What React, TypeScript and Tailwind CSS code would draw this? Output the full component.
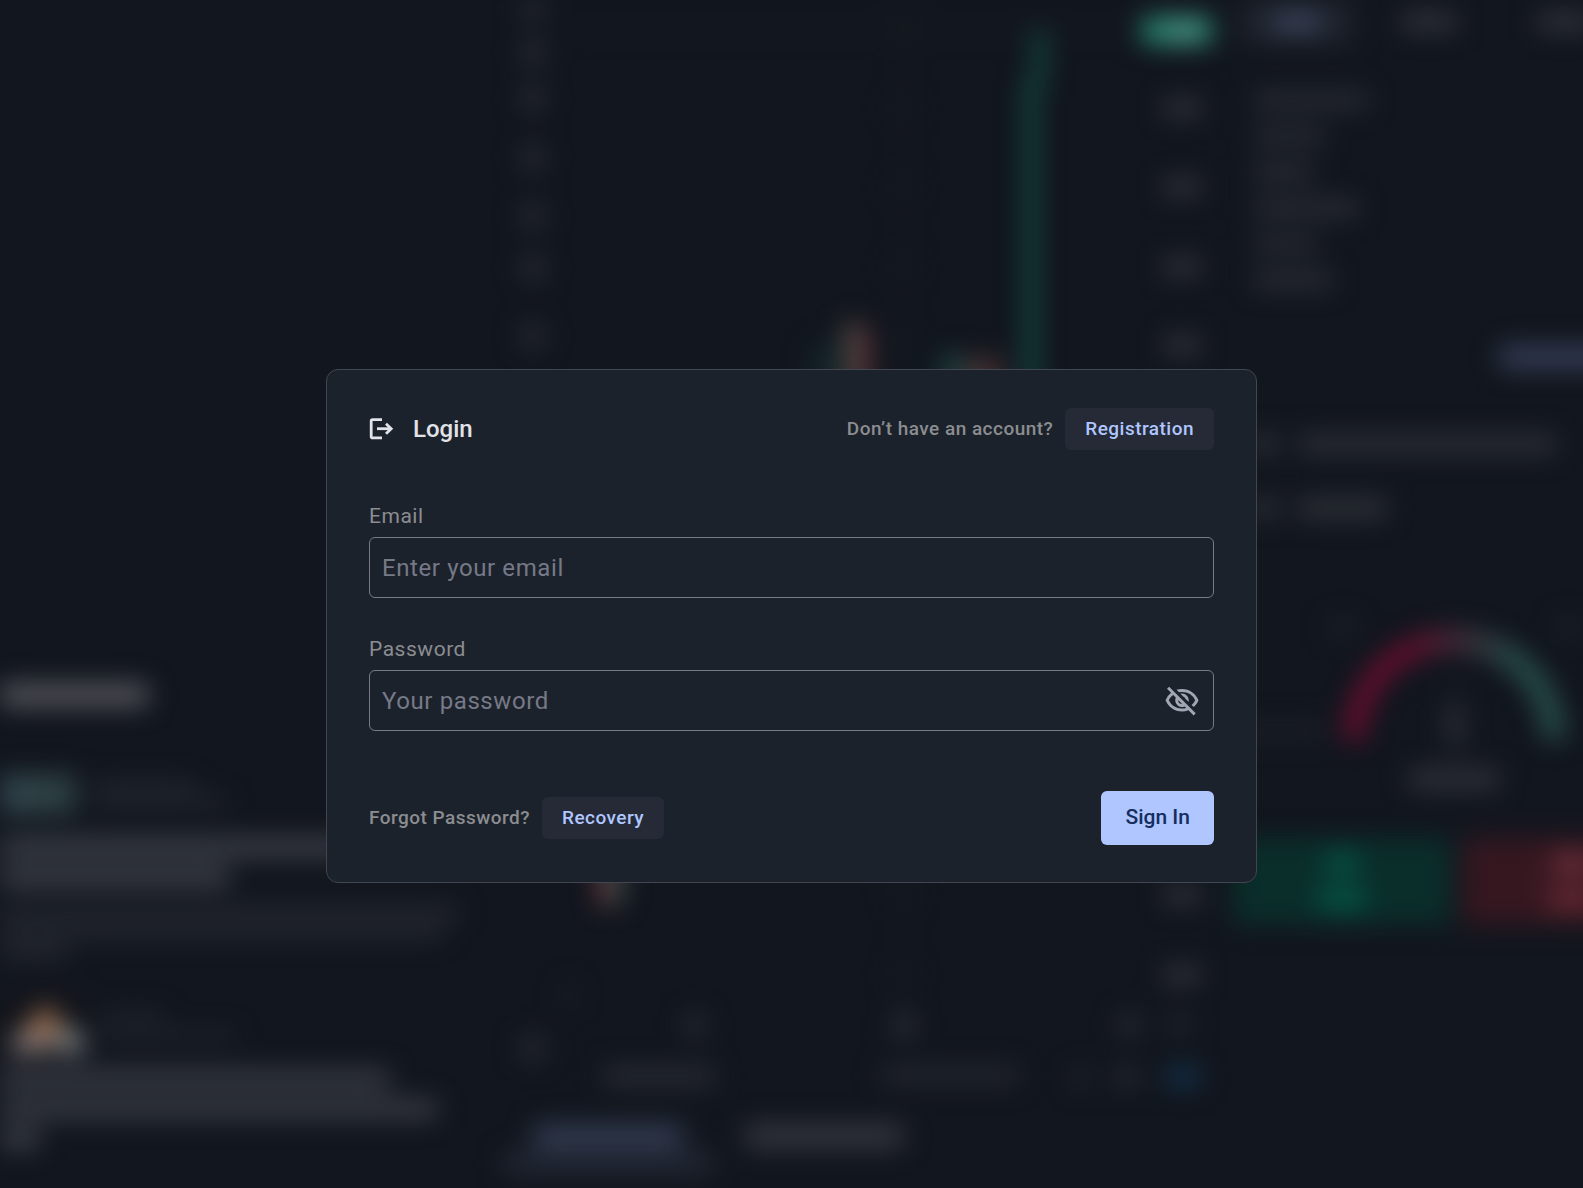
import { useState } from "react";
import type { FormEvent } from "react";
import clsx from "clsx";
import { MdOutlineVisibility, MdOutlineVisibilityOff } from "react-icons/md";

function Bar({ className }: { className: string }) {
  return <div className={clsx("rounded-sm", className)} />;
}

function LoginIcon() {
  return (
    <svg
      viewBox="0 0 28 28"
      className="size-7"
      fill="none"
      stroke="currentColor"
      strokeWidth="2.8"
      aria-hidden="true"
    >
      <path d="M13 4.6H3.6a1.4 1.4 0 0 0-1.4 1.4V21.4a1.4 1.4 0 0 0 1.4 1.4H13" />
      <path d="M8 13.7H22" />
      <path d="M17 8.7L22.2 13.7L17 18.7" />
    </svg>
  );
}

function NewsColumn() {
  return (
    <div className="flex flex-col pt-[684px]">
      <Bar className="h-[22px] w-[148px] bg-[#56585d]" />

      <div className="mt-[68px] flex items-center gap-4">
        <div className="h-10 w-[76px] bg-gradient-to-r from-[#32454f] to-[#2c403f]" />
        <div className="flex flex-col gap-2">
          <Bar className="h-2 w-[104px] bg-[#2a2d34]" />
          <Bar className="h-2 w-[136px] bg-[#2a2d34]" />
        </div>
      </div>
      <div className="mt-6 flex flex-col gap-3">
        <Bar className="h-[18px] w-[350px] bg-[#40434b]" />
        <Bar className="h-[18px] w-[230px] bg-[#40434b]" />
      </div>
      <div className="mt-5 flex flex-col gap-2">
        <Bar className="h-3 w-[460px] bg-[#272a32]" />
        <Bar className="h-3 w-[444px] bg-[#272a32]" />
        <Bar className="h-3 w-[68px] bg-[#292c34]" />
      </div>

      <div className="mt-10 flex items-center gap-4">
        <svg viewBox="0 0 84 56" className="h-14 w-[84px]">
          <rect width="84" height="56" fill="#14151a" />
          <path d="M16 46 L32 20 L48 6 L60 24 L54 46 Z" fill="#94694c" />
          <path d="M8 54 L20 32 L42 38 L48 54 Z" fill="#8a7f80" />
          <path d="M54 54 L60 26 L84 38 L84 54 Z" fill="#7e8386" />
        </svg>
        <div className="flex flex-col gap-3">
          <Bar className="h-2 w-16 bg-[#262a31]" />
          <Bar className="h-2 w-[136px] bg-[#262a31]" />
        </div>
      </div>
      <div className="mt-4 flex flex-col gap-3">
        <Bar className="h-[18px] w-[390px] bg-[#3b3e46]" />
        <Bar className="h-[18px] w-[438px] bg-[#3b3e46]" />
        <Bar className="h-[18px] w-10 bg-[#40434b]" />
      </div>
    </div>
  );
}

function Chart() {
  const tools = [8, 53, 98, 158, 216, 268, 336, 1048];
  const prices = [108, 187, 267, 345, 895, 975];
  const gridRows = [30, 108, 187, 267, 345, 895, 975];

  return (
    <svg viewBox="0 0 746 1188" className="h-[1188px] w-[746px]">
      <path d="M416 0V1000M86 30H650" stroke="#1c2229" strokeWidth="2" />
      {gridRows.map((y) => (
        <rect key={y} x="406" y={y - 10} width="20" height="20" fill="#161c21" />
      ))}
      {tools.map((y) => (
        <rect key={y} x="34" y={y - 13} width="24" height="26" rx="6" fill="#262930" />
      ))}
      {prices.map((y) => (
        <rect key={y} x="676" y={y - 8} width="38" height="16" fill="#33353c" />
      ))}

      {/* Candles */}
      <rect x="324" y="345" width="22" height="60" fill="#13262a" />
      <rect x="355" y="322" width="14" height="80" fill="#404641" />
      <rect x="370" y="326" width="11" height="80" fill="#70373c" />
      <rect x="456" y="354" width="18" height="50" fill="#1c4742" />
      <rect x="478" y="358" width="36" height="50" fill="#463233" />
      <rect x="536" y="80" width="16" height="320" fill="#13463f" />
      <rect x="546" y="30" width="13" height="54" fill="#134c44" />
      <rect x="111" y="850" width="12" height="56" fill="#70393f" />
      <rect x="124" y="850" width="12" height="54" fill="#35504a" />

      {/* Last price */}
      <rect x="655" y="17" width="70" height="27" rx="3" fill="#278570" />
      <rect x="682" y="22" width="30" height="17" fill="#559a88" />

      {/* Time axis */}
      <rect x="76" y="985" width="12" height="20" fill="#1e2228" />
      <rect x="198" y="1014" width="20" height="22" fill="#292c33" />
      <rect x="406" y="1014" width="22" height="22" fill="#2c2f36" />
      <rect x="632" y="1014" width="20" height="22" fill="#292c33" />
      <rect x="682" y="1014" width="20" height="20" fill="#21252b" />

      <rect x="116" y="1066" width="112" height="20" fill="#272a31" />
      <rect x="394" y="1066" width="138" height="18" fill="#23262d" />
      <rect x="586" y="1068" width="16" height="18" fill="#23262d" />
      <rect x="630" y="1068" width="20" height="18" fill="#2b2e35" />
      <rect x="678" y="1066" width="36" height="22" fill="#122e46" />

      {/* Tabs */}
      <rect x="46" y="1124" width="150" height="24" fill="#333c52" />
      <rect x="16" y="1154" width="210" height="18" fill="#252b39" />
      <rect x="258" y="1124" width="158" height="24" fill="#34363d" />
    </svg>
  );
}

function Gauge() {
  return (
    <svg viewBox="0 0 350 200" className="h-[200px] w-[350px]">
      <defs>
        <linearGradient id="gauge" x1="0" x2="1" y1="0" y2="0">
          <stop offset="0.3" stopColor="#6e0d30" />
          <stop offset="0.55" stopColor="#44333f" />
          <stop offset="0.8" stopColor="#2a5650" />
        </linearGradient>
      </defs>
      <path
        d="M121 142A100 100 0 0 1 321 142"
        fill="none"
        stroke="url(#gauge)"
        strokeWidth="20"
      />
      <path d="M222 84L228 148H214Z" fill="#33353c" />
      <rect x="213" y="110" width="18" height="36" fill="#2b2e35" />
      <rect x="176" y="171" width="90" height="20" fill="#30323a" />
      <rect x="2" y="124" width="90" height="16" fill="#1c1f27" />
      <rect x="96" y="22" width="26" height="14" fill="#1f232a" />
      <rect x="324" y="22" width="26" height="14" fill="#1f232a" />
    </svg>
  );
}

function SidePanel() {
  return (
    <div className="flex flex-col">
      <div className="flex h-11 gap-4 pl-2">
        <div className="flex w-[112px] shrink-0 items-center justify-center bg-[#1f232d]">
          <Bar className="h-4 w-12 bg-[#414c66]" />
        </div>
        <div className="flex w-[120px] shrink-0 items-center justify-center">
          <Bar className="h-4 w-14 bg-[#35373e]" />
        </div>
        <div className="flex w-[120px] shrink-0 items-center justify-center">
          <Bar className="h-4 w-14 bg-[#35373e]" />
        </div>
      </div>

      <div className="mt-12 flex flex-col gap-5 pl-5">
        <Bar className="h-4 w-[116px] bg-[#2a2d34]" />
        <Bar className="h-4 w-[72px] bg-[#2a2d34]" />
        <Bar className="h-4 w-[60px] bg-[#2c2f35]" />
        <Bar className="h-4 w-[106px] bg-[#2c2f35]" />
        <Bar className="h-4 w-[64px] bg-[#2a2d34]" />
        <Bar className="h-4 w-[80px] bg-[#2c2f35]" />
      </div>

      <div className="mt-[58px] pl-[266px]">
        <Bar className="h-[22px] w-[120px] bg-[#37405a]" />
      </div>

      <div className="mt-16 flex flex-col gap-10 pl-5">
        <div className="flex items-center gap-5">
          <div className="size-6 rounded-full bg-[#31343c]" />
          <Bar className="h-5 w-[260px] bg-[#2b2e35]" />
        </div>
        <div className="flex items-center gap-5">
          <div className="size-6 rounded-full bg-[#31343c]" />
          <Bar className="h-5 w-[90px] bg-[#2e3137]" />
        </div>
      </div>

      <div className="mt-[78px]">
        <Gauge />
      </div>

      <div className="mt-10 flex gap-3">
        <div className="flex h-[86px] w-[218px] shrink-0 flex-col items-center justify-center gap-4 bg-[#0a2e2a]">
          <Bar className="h-5 w-8 bg-[#045849]" />
          <Bar className="h-5 w-12 bg-[#045849]" />
        </div>
        <div className="flex h-[86px] w-[218px] shrink-0 flex-col items-center justify-center gap-4 bg-[#361720]">
          <Bar className="h-5 w-10 bg-[#70303a]" />
          <Bar className="h-5 w-12 bg-[#6a2a34]" />
        </div>
      </div>
    </div>
  );
}

function Dashboard() {
  return (
    <div
      aria-hidden="true"
      className="grid h-screen grid-cols-[487px_1fr_350px] blur-[13px]"
    >
      <NewsColumn />
      <Chart />
      <SidePanel />
    </div>
  );
}

const fieldClass =
  "h-[61px] w-full rounded-md border border-[#777a86] bg-transparent px-3 text-2xl tracking-wide text-[#e2e2e9] placeholder:text-[#767987] focus:border-[#b0c6ff] focus:outline-none";

const labelClass = "text-[21px] leading-8 tracking-wide text-[#8b8d91]";

const hintClass = "text-[19px] font-medium tracking-wide text-[#8b8d91]";

const linkClass =
  "flex h-[42px] items-center rounded-md bg-[#252a36] px-5 text-[19px] font-medium tracking-wide text-[#b0c6ff] hover:bg-[#2d3342]";

export default function App() {
  const [email, setEmail] = useState("");
  const [password, setPassword] = useState("");
  const [showPassword, setShowPassword] = useState(false);

  const handleSubmit = (e: FormEvent) => {
    e.preventDefault();
  };

  return (
    <div className="relative overflow-hidden bg-[#12161e] font-['Roboto',sans-serif]">
      <Dashboard />

      {/* Overlay */}
      <div className="absolute inset-0 flex items-center justify-center pt-16">
        <form
          onSubmit={handleSubmit}
          className="w-full max-w-[931px] rounded-xl border border-[#414650] bg-[#1c222b] px-[42px] pt-[38px] pb-[37px]"
        >
          {/* Header */}
          <div className="flex items-center justify-between">
            <div className="flex items-center gap-4 text-[#e2e2e9]">
              <LoginIcon />
              <h1 className="text-2xl font-medium">Login</h1>
            </div>
            <div className="flex items-center gap-3">
              <span className={hintClass}>Don’t have an account?</span>
              <a href="#registration" className={linkClass}>
                Registration
              </a>
            </div>
          </div>

          {/* Fields */}
          <div className="mt-[50px] flex flex-col gap-[35px]">
            <div className="flex flex-col gap-[5px]">
              <label htmlFor="email" className={labelClass}>
                Email
              </label>
              <input
                id="email"
                type="email"
                value={email}
                onChange={(e) => setEmail(e.target.value)}
                placeholder="Enter your email"
                className={fieldClass}
              />
            </div>
            <div className="flex flex-col gap-[5px]">
              <label htmlFor="password" className={labelClass}>
                Password
              </label>
              <div className="relative">
                <input
                  id="password"
                  type={showPassword ? "text" : "password"}
                  value={password}
                  onChange={(e) => setPassword(e.target.value)}
                  placeholder="Your password"
                  className={fieldClass}
                />
                <button
                  type="button"
                  aria-label={showPassword ? "Hide password" : "Show password"}
                  onClick={() => setShowPassword(!showPassword)}
                  className="absolute inset-y-0 right-3.5 flex items-center text-[#a2a5b3]"
                >
                  {showPassword ? (
                    <MdOutlineVisibility size={36} />
                  ) : (
                    <MdOutlineVisibilityOff size={36} />
                  )}
                </button>
              </div>
            </div>
          </div>

          {/* Footer */}
          <div className="mt-[60px] flex items-center justify-between">
            <div className="flex items-center gap-3">
              <span className={hintClass}>Forgot Password?</span>
              <a href="#recovery" className={linkClass}>
                Recovery
              </a>
            </div>
            <button
              type="submit"
              className="h-[54px] rounded-md bg-[#b0c6ff] px-6 text-[21px] font-medium text-[#152e60] hover:bg-[#c2d3ff]"
            >
              Sign In
            </button>
          </div>
        </form>
      </div>
    </div>
  );
}
